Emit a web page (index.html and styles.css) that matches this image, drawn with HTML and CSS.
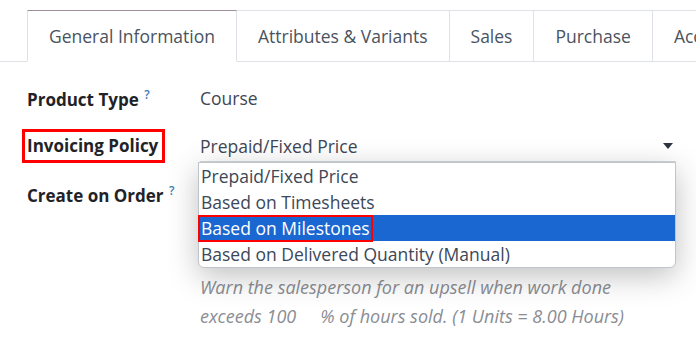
FILE: index.html
```html
<!DOCTYPE html>
<html lang="en">
<head>
  <meta charset="UTF-8">
  <title>Product Form</title>
  <link rel="stylesheet" href="styles.css">
</head>
<body>
  <div class="tabs">
    <div class="tab active">General Information</div>
    <div class="tab">Attributes &amp; Variants</div>
    <div class="tab">Sales</div>
    <div class="tab">Purchase</div>
    <div class="tab">Accounting</div>
  </div>

  <div class="form">
    <div class="row">
      <div class="label">Product Type <sup class="help">?</sup></div>
      <div class="value">Course</div>
    </div>
    <div class="row">
      <div class="label"><span class="marked">Invoicing Policy</span></div>
      <div class="value select-wrap">
        <div class="select">
          <span>Prepaid/Fixed Price</span>
          <span class="caret"></span>
        </div>
        <div class="options">
          <div class="option">Prepaid/Fixed Price</div>
          <div class="option">Based on Timesheets</div>
          <div class="option selected"><span class="marked-option">Based on Milestones</span></div>
          <div class="option">Based on Delivered Quantity (Manual)</div>
        </div>
      </div>
    </div>
    <div class="row">
      <div class="label">Create on Order <sup class="help">?</sup></div>
      <div class="value"></div>
    </div>
    <div class="row upsell">
      <div></div>
      <div class="note">
        Warn the salesperson for an upsell when work done<br>
        exceeds 100<span class="gap"></span>% of hours sold. (1 Units = 8.00 Hours)
      </div>
    </div>
  </div>
</body>
</html>
```

FILE: styles.css
```css
body {
  margin: 0;
  font-family: "Open Sans", "Noto Sans", sans-serif;
  color: #212529;
  background: #fff;
  overflow: hidden;
}
.tabs {
  display: flex;
  margin-top: 10px;
  padding-left: 27px;
  border-bottom: 1px solid #dee2e6;
  white-space: nowrap;
}
.tab {
  padding: 0 21px;
  height: 50px;
  line-height: 50px;
  font-size: 17.5px;
  color: #4a5360;
  border-top: 1px solid #dee2e6;
  border-right: 1px solid #dee2e6;
}
.tab.active {
  border: 1px solid #dee2e6;
  border-top-color: #a08f9c;
  border-bottom: 1px solid #fff;
  margin-bottom: -1px;
  background: #fff;
}
.form {
  padding-left: 27px;
  padding-top: 12px;
}
.row {
  display: grid;
  grid-template-columns: 173px 480px;
  height: 48px;
  align-items: center;
}
.label {
  font-size: 17px;
  font-weight: 700;
  color: #1f2328;
}
.help {
  color: #3a7fb8;
  font-size: 12px;
  font-weight: 600;
  margin-left: 1px;
}
.marked {
  display: inline-block;
  border: 3px solid #f00;
  padding: 2px 4px 3px 2px;
  margin-left: -5px;
}
.value {
  font-size: 17.5px;
  color: #3f4654;
}
.select-wrap {
  position: relative;
}
.select {
  display: flex;
  justify-content: space-between;
  align-items: center;
  height: 30px;
  border-bottom: 1px solid #d5d8dc;
  width: 476px;
}
.caret {
  width: 0;
  height: 0;
  border-left: 5px solid transparent;
  border-right: 5px solid transparent;
  border-top: 6px solid #2c3440;
  margin-right: 3px;
}
.options {
  position: absolute;
  top: 100%;
  left: -2px;
  width: 476px;
  background: #fff;
  border: 1px solid #bfc4ca;
  border-radius: 0 0 6px 6px;
  box-shadow: 0 8px 30px rgba(0, 0, 0, 0.25);
  z-index: 2;
}
.option {
  height: 26px;
  line-height: 26px;
  padding-left: 2px;
  color: #3c4758;
}
.option.selected {
  background: #1a67d2;
  color: #fff;
}
.marked-option {
  display: inline-block;
  height: 23px;
  line-height: 23px;
  border: 2px solid #f00;
  margin-left: -3px;
  padding: 0 1px 0 1px;
}
.upsell {
  height: auto;
  margin-top: 55px;
}
.note {
  font-size: 18px;
  font-style: italic;
  color: #8a8d93;
  line-height: 29px;
}
.gap {
  display: inline-block;
  width: 24px;
}
```
